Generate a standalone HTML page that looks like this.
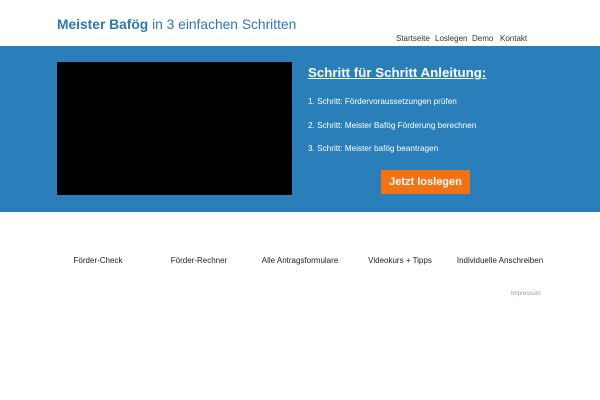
<!DOCTYPE html>
<html><head><meta charset="utf-8"><style>
body{margin:0;width:600px;height:400px;background:#fff;font-family:"Liberation Sans",sans-serif;position:relative;overflow:hidden}
.t{position:absolute;left:57px;top:17px;font-size:13.8px;color:#2e78b2;white-space:nowrap}
.t b{font-weight:bold}
.nav{position:absolute;top:34px;font-size:8px;color:#333}
.band{position:absolute;left:0;top:46px;width:600px;height:166px;background:#2a7fba}
.vid{position:absolute;left:57px;top:62px;width:235px;height:133px;background:#000}
.h{position:absolute;left:308px;top:65px;font-size:13.3px;font-weight:bold;color:#fff;text-decoration:underline;white-space:nowrap}
.s{position:absolute;left:308px;font-size:8.2px;color:#fff;white-space:nowrap}
.btn{position:absolute;left:381px;top:170px;width:89px;height:24px;background:#f47216;color:#fff;font-size:11px;font-weight:bold;text-align:center;line-height:24px}
.f{position:absolute;top:256px;font-size:8px;color:#222;white-space:nowrap;transform:translateX(-50%)}
</style></head><body>
<div class="t"><b>Meister Bafög</b> in 3 einfachen Schritten</div>
<div class="nav" style="left:396px">Startseite</div>
<div class="nav" style="left:435px">Loslegen</div>
<div class="nav" style="left:472px">Demo</div>
<div class="nav" style="left:500px">Kontakt</div>
<div class="band"></div>
<div class="vid"></div>
<div class="h">Schritt für Schritt Anleitung:</div>
<div class="s" style="top:97px">1. Schritt: Fördervoraussetzungen prüfen</div>
<div class="s" style="top:121px">2. Schritt: Meister Bafög Förderung berechnen</div>
<div class="s" style="top:144px">3. Schritt: Meister bafög beantragen</div>
<div class="btn">Jetzt loslegen</div>
<div class="f" style="left:98px">Förder-Check</div>
<div class="f" style="left:199px">Förder-Rechner</div>
<div class="f" style="left:300px">Alle Antragsformulare</div>
<div class="f" style="left:400px">Videokurs + Tipps</div>
<div class="f" style="left:500px">Individuelle Anschreiben</div>
<div style="position:absolute;left:511px;top:291px;font-size:6px;color:#999">Impressum</div>
</body></html>
